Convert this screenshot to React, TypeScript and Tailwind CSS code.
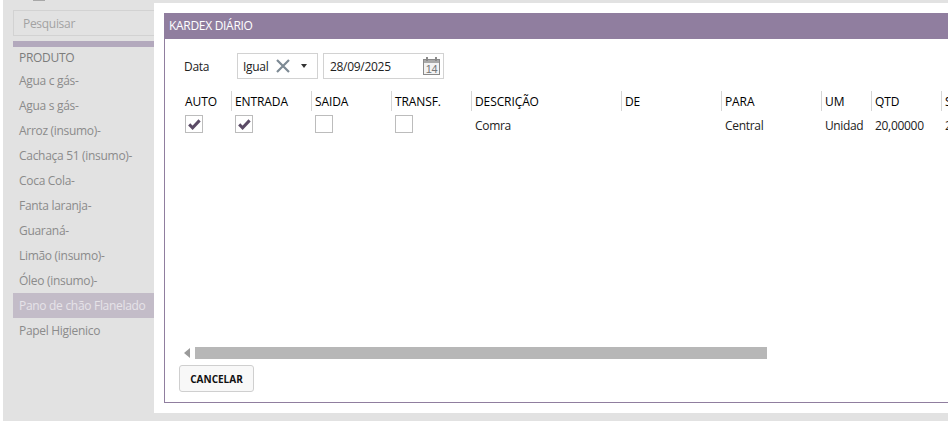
const produtos = [
  'Agua c gás-',
  'Agua s gás-',
  'Arroz (insumo)-',
  'Cachaça 51 (insumo)-',
  'Coca Cola-',
  'Fanta laranja-',
  'Guaraná-',
  'Limão (insumo)-',
  'Óleo (insumo)-',
  'Pano de chão Flanelado',
  'Papel Higienico',
];

const colunas = [
  { titulo: 'AUTO', w: 'w-[49px]' },
  { titulo: 'ENTRADA', w: 'w-[80px]' },
  { titulo: 'SAIDA', w: 'w-[80px]' },
  { titulo: 'TRANSF.', w: 'w-[80px]' },
  { titulo: 'DESCRIÇÃO', w: 'w-[150px]' },
  { titulo: 'DE', w: 'w-[100px]' },
  { titulo: 'PARA', w: 'w-[100px]' },
  { titulo: 'UM', w: 'w-[50px]' },
  { titulo: 'QTD', w: 'w-[70px]' },
  { titulo: 'S', w: 'w-[70px]' },
];

function Check({ marcado }: { marcado?: boolean }) {
  return (
    <div className="w-[18px] h-[18px] border border-[#bcbcbc] bg-white flex items-center justify-center">
      {marcado && (
        <svg width="13" height="11" viewBox="0 0 13 11">
          <path d="M1.2 5.4 L4.6 8.8 L11.6 1.4" fill="none" stroke="#5b4b66" strokeWidth="3" />
        </svg>
      )}
    </div>
  );
}

function Calendario() {
  return (
    <svg width="17" height="18" viewBox="0 0 17 18" className="text-[#8a8a8a]">
      <rect x="0.5" y="2.5" width="16" height="15" fill="#f2f2f2" stroke="currentColor" />
      <rect x="1" y="3" width="15" height="3" fill="#a8a8a8" />
      <rect x="3" y="0" width="2" height="4" fill="#8a8a8a" />
      <rect x="12" y="0" width="2" height="4" fill="#8a8a8a" />
      <text x="8.5" y="15.5" textAnchor="middle" fontSize="11" fontFamily="'Liberation Sans', sans-serif" fill="#777">14</text>
    </svg>
  );
}

export default function App() {
  return (
    <div className="relative w-[948px] h-[421px] overflow-hidden bg-white pl-[3px] font-['Open_Sans',sans-serif] text-[12px] tracking-[-0.3px]">
      <div className="absolute left-[33px] top-0 w-[12px] h-[1px] bg-[#a8a8a8]" />
      <div className="h-full bg-[#e2e2e2] pt-[3px] pb-[8px] flex">
        {/* Lista de produtos */}
        <aside className="w-[151px] shrink-0 pl-[10px] pt-[7px] text-[#8b8b8b]">
          <div className="h-[26px] border border-[#d2d2d2] border-r-0 px-[9px] pt-[2px] flex items-center text-[#a3a3a3]">Pesquisar</div>
          <div className="h-[6px] mt-[5px] bg-[#b3a9bd]" />
          <div className="h-[20px] mt-[1px] px-[6px] flex items-center text-[12px] font-medium text-[#7c7c7c]">PRODUTO</div>
          {produtos.map((p) => (
            <div
              key={p}
              className={`h-[25px] px-[6px] flex items-center whitespace-nowrap ${p.startsWith('Pano') ? 'bg-[#c3bcc8] text-[#e6e3e8]' : ''}`}
            >
              {p}
            </div>
          ))}
        </aside>

        {/* Painel */}
        <main className="flex-1 min-w-0 bg-white pt-[10px] pb-[10px] pl-[10px]">
          <div className="h-full border-l border-b border-[#907e9f] flex flex-col">
            <div className="h-[26px] -ml-px bg-[#907e9f] text-white px-[5px] flex items-center">KARDEX DIÁRIO</div>

            <div className="flex items-center mt-[14px] ml-[19px] text-[#222]">
              <span className="w-[53px] pt-[2px]">Data</span>
              <div className="w-[81px] h-[26px] border border-[#d2d2d2] flex items-center pl-[5px]">
                <span className="pt-[2px]">Igual</span>
                <svg width="14" height="14" viewBox="0 0 14 14" className="ml-[8px]">
                  <path d="M1 1 L13 13 M13 1 L1 13" stroke="#7d8a94" strokeWidth="2.2" />
                </svg>
                <span className="ml-[11px] w-0 h-0 border-x-[3.5px] border-x-transparent border-t-[4px] border-t-[#333]" />
              </div>
              <div className="w-[121px] h-[26px] ml-[5px] border border-[#d2d2d2] flex items-center justify-between pl-[6px] pr-[3px]">
                <span className="pt-[2px]">28/09/2025</span>
                <Calendario />
              </div>
            </div>

            {/* Tabela */}
            <div className="mt-[12px] ml-[17px] flex-1 overflow-hidden">
              <div className="flex w-[829px] h-[20px] text-black font-medium tracking-[-0.1px]">
                {colunas.map((c, i) => (
                  <div key={c.titulo} className={`${c.w} shrink-0 pl-[3px] pt-[2px] flex items-center ${i > 0 ? 'border-l border-[#d6d6d6] pl-[2px]' : ''}`}>
                    {c.titulo}
                  </div>
                ))}
              </div>
              <div className="flex w-[829px] h-[24px] mt-[1px] text-[#222] items-center">
                <div className="w-[49px] shrink-0 pl-[3px]"><Check marcado /></div>
                <div className="w-[80px] shrink-0 pl-[4px]"><Check marcado /></div>
                <div className="w-[80px] shrink-0 pl-[4px]"><Check /></div>
                <div className="w-[80px] shrink-0 pl-[4px]"><Check /></div>
                <div className="w-[150px] shrink-0 pl-[4px] pt-[4px]">Comra</div>
                <div className="w-[100px] shrink-0 pl-[4px]" />
                <div className="w-[100px] shrink-0 pl-[4px] pt-[4px]">Central</div>
                <div className="w-[50px] shrink-0 pl-[4px] pt-[4px] overflow-hidden tracking-[-0.4px]">Unidad</div>
                <div className="w-[70px] shrink-0 pl-[4px] pt-[4px]">20,00000</div>
                <div className="w-[70px] shrink-0 pl-[4px] pt-[4px]">2</div>
              </div>
            </div>

            <div className="flex items-center ml-[19px] h-[12px]">
              <span className="w-0 h-0 border-y-[5.5px] border-y-transparent border-r-[6px] border-r-[#9a9a9a]" />
              <div className="ml-[5px] w-[572px] h-[12px] bg-[#b7b7b7]" />
            </div>

            <button className="mt-[6px] mb-[10px] ml-[14px] w-[75px] h-[27px] pt-[1px] border border-[#cfcfcf] rounded-[3px] bg-[#f8f8f8] text-[10px] font-bold tracking-normal text-[#111]">
              CANCELAR
            </button>
          </div>
        </main>
      </div>
    </div>
  );
}
